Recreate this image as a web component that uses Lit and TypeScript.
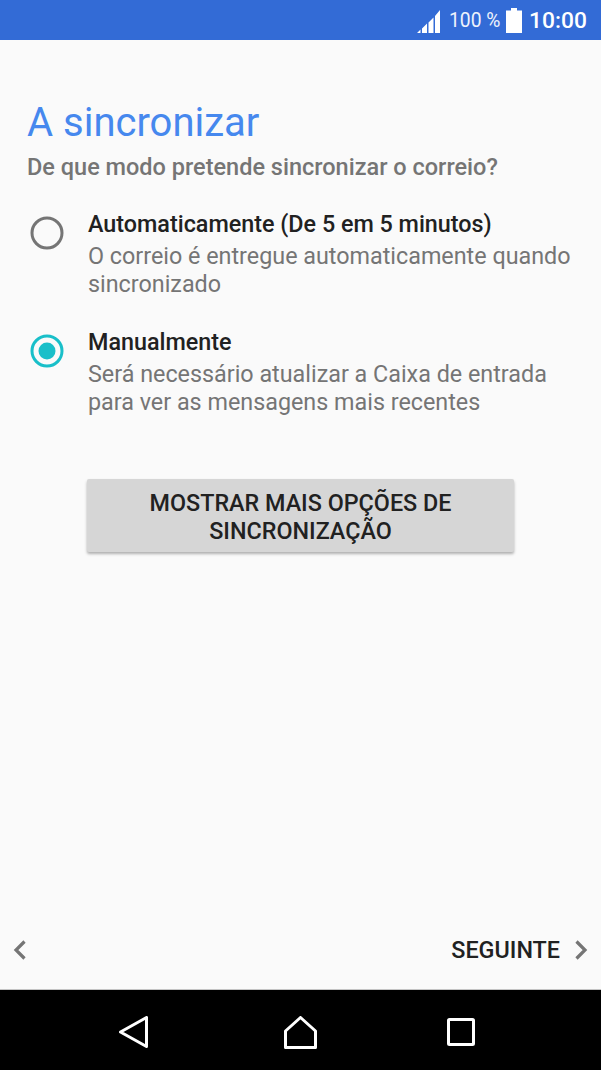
import { LitElement, html, css } from "lit";
import { customElement } from "lit/decorators.js";

@customElement("app-root")
export class AppRoot extends LitElement {
  static styles = css`
    :host { display: block; width: 601px; height: 1070px; font-family: Roboto, sans-serif; background: #fafafa; }
    .page { display: flex; flex-direction: column; height: 1070px; }
    .status { height: 40px; flex: none; background: #336bd6; color: #fff; display: flex; align-items: center; padding-left: 417px; box-sizing: border-box; }
    .signal { width: 23px; height: 23px; margin-right: 9px; margin-top: 3px; flex: none; }
    .pct { font-size: 19.300px; width: 57px; color: #eef3fc; line-height: 24px; margin-top: 2px; flex: none; }
    .batt { width: 16px; height: 25px; margin-right: 7px; margin-top: 1px; flex: none; }
    .time { font-size: 22.800px; font-weight: 500; line-height: 28px; margin-top: 2px; }
    .content { flex: 1; padding: 60px 27px 0; box-sizing: border-box; }
    h1 { margin: 0; font-size: 40px; font-weight: 400; line-height: 46px; color: #4688ee; }
    .sub { margin-top: 7px; font-size: 23.500px; font-weight: 500; line-height: 28px; color: #757575; }
    .options { margin-top: 29px; display: flex; flex-direction: column; gap: 30px; }
    .opt { display: flex; }
    .radio { width: 34px; height: 34px; flex: none; margin: 6px 24px 0 3px; }
    .t { font-size: 23.330px; font-weight: 500; line-height: 28px; color: #212121; margin-bottom: 4px; }
    .d { font-size: 23.330px; line-height: 28px; color: #757575; }
    .btn { margin: 63px 0 0 60px; width: 427px; height: 73px; padding-top: 2px; box-sizing: border-box; background: #d6d6d6; border-radius: 2px; box-shadow: 0 2px 3px rgba(0,0,0,.3); display: flex; align-items: center; justify-content: center; text-align: center; font-size: 23.330px; font-weight: 500; line-height: 28px; color: #212121; }
    .foot { flex: none; height: 80px; display: flex; align-items: flex-start; justify-content: space-between; padding: 27px 13px 0; box-sizing: border-box; border-bottom: 1px solid #c4c4c4; }
    .foot svg { width: 13px; height: 20px; display: block; }
    .next { display: flex; align-items: center; gap: 15px; font-size: 23.330px; font-weight: 500; color: #212121; line-height: 26px; }
    .prev { height: 26px; display: flex; align-items: center; }
    .nav { height: 80px; flex: none; background: #000; display: flex; align-items: center; padding: 4px 0 0 119px; box-sizing: border-box; }
    .nav svg { display: block; flex: none; }
    .g1 { width: 136px; flex: none; }
    .g2 { width: 130px; flex: none; }
  `;

  render() {
    return html`<div class="page">
      <div class="status">
        <svg class="signal" viewBox="0 0 23 23" fill="#fff"><path d="M0 23h3.500v-3.500zM5 23H10v-9.500L5 18.500zM11.500 23h5V7.500L11.500 12.500zM18 23h5V0l-5 6z"/></svg>
        <span class="pct">100 %</span>
        <svg class="batt" viewBox="0 0 16 25" fill="#fff"><path d="M5 0h6v2.500h5V25H0V2.500h5z"/></svg>
        <span class="time">10:00</span>
      </div>
      <div class="content">
        <h1>A sincronizar</h1>
        <div class="sub">De que modo pretende sincronizar o correio?</div>
        <div class="options">
          <div class="opt">
            <svg class="radio" viewBox="0 0 34 34"><circle cx="17" cy="17" r="15" fill="none" stroke="#757575" stroke-width="3"/></svg>
            <div><div class="t">Automaticamente (De 5 em 5 minutos)</div><div class="d">O correio é entregue automaticamente quando<br>sincronizado</div></div>
          </div>
          <div class="opt">
            <svg class="radio" viewBox="0 0 34 34"><circle cx="17" cy="17" r="15" fill="none" stroke="#19bfc9" stroke-width="3"/><circle cx="17" cy="17" r="8.500" fill="#19bfc9"/></svg>
            <div><div class="t">Manualmente</div><div class="d">Será necessário atualizar a Caixa de entrada<br>para ver as mensagens mais recentes</div></div>
          </div>
        </div>
        <div class="btn"><span>MOSTRAR MAIS OPÇÕES DE<br>SINCRONIZAÇÃO</span></div>
      </div>
      <div class="foot">
        <div class="prev"><svg viewBox="0 0 13 20"><path d="M11.500 1.500 L3 10 L11.500 18.500" fill="none" stroke="#757575" stroke-width="3.200"/></svg></div>
        <div class="next">SEGUINTE <svg viewBox="0 0 13 20"><path d="M1.500 1.500 L10 10 L1.500 18.500" fill="none" stroke="#757575" stroke-width="3.200"/></svg></div>
      </div>
      <div class="nav">
        <svg width="29" height="32" viewBox="0 0 29 32"><path d="M1.500 16 L27.500 1.500 V30.500 Z" fill="none" stroke="#fff" stroke-width="3" stroke-linejoin="round"/></svg>
        <div class="g1"></div>
        <svg width="33" height="33" viewBox="0 0 33 33"><path d="M16.500 1.500 L31.500 15 V31.500 H1.500 V15 Z" fill="none" stroke="#fff" stroke-width="3" stroke-linejoin="round"/></svg>
        <div class="g2"></div>
        <svg width="28" height="28" viewBox="0 0 28 28"><rect x="1.500" y="1.500" width="25" height="25" rx="1" fill="none" stroke="#fff" stroke-width="3"/></svg>
      </div>
    </div>`;
  }
}
